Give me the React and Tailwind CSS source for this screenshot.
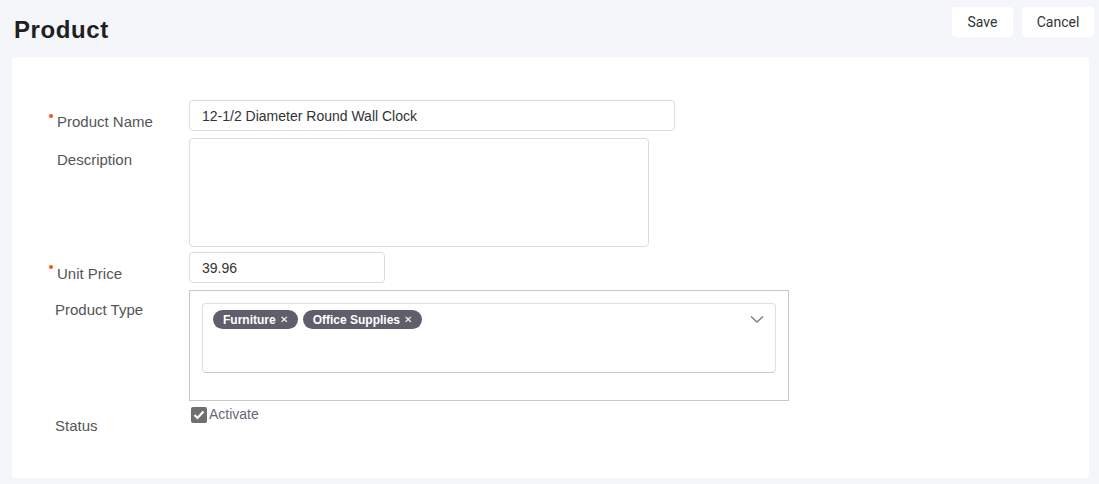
export default function App() {
    const font = { fontFamily: '"Liberation Sans", Arial, sans-serif' };

    return (
        <div className="min-h-[484px] bg-[#f5f6fa] pl-3 pr-[10px] pt-[7px] pb-[6px]" style={font}>
            {/* Header */}
            <div className="flex items-start justify-between h-[50px]">
                <h1 className="ml-[2px] mt-[9px] text-[24px] leading-[28px] font-bold tracking-[0.6px] text-[#1f1f24]">Product</h1>
                <div className="flex gap-[9px] mr-[-5px]">
                    <button className="h-[30px] w-[61px] rounded bg-white text-[14px] text-[#333] font-['Roboto']">Save</button>
                    <button className="h-[30px] w-[72px] rounded bg-white text-[14px] text-[#333] font-['Roboto']">Cancel</button>
                </div>
            </div>

            {/* Form card */}
            <div className="h-[421px] rounded bg-white pl-[45px] pt-[43px]">
                <div className="flex">
                    <label className="relative h-[31px] w-[132px] pt-[12px] text-[15px] leading-5 text-[#555]">
                        <span className="absolute left-[-8px] top-[14px] h-[4px] w-[4px] rounded-full bg-[#f0541e]" />
                        Product Name
                    </label>
                    <input readOnly value="12-1/2 Diameter Round Wall Clock" className="h-[31px] w-[486px] rounded border border-[#dcdcdc] px-[12px] text-[14px] text-[#333] outline-none" />
                </div>

                <div className="flex mt-[7px]">
                    <label className="h-[31px] w-[132px] pt-[12px] text-[15px] leading-5 text-[#555]">Description</label>
                    <textarea readOnly className="h-[109px] w-[460px] resize-none rounded border border-[#dcdcdc] outline-none" />
                </div>

                <div className="flex mt-[5px]">
                    <label className="relative h-[31px] w-[132px] pt-[12px] text-[15px] leading-5 text-[#555]">
                        <span className="absolute left-[-8px] top-[13px] h-[4px] w-[4px] rounded-full bg-[#f0541e]" />
                        Unit Price
                    </label>
                    <input readOnly value="39.96" className="h-[31px] w-[196px] rounded border border-[#dcdcdc] px-[12px] text-[14px] text-[#333] outline-none" />
                </div>

                <div className="flex mt-[7px]">
                    <label className="h-[31px] w-[132px] -ml-[2px] mr-[2px] pt-[10px] text-[15px] leading-5 text-[#555]">Product Type</label>
                    <div className="h-[111px] w-[600px] border border-[#c8c8c8] p-[12px] pb-0">
                        <div className="relative h-[70px] w-[574px] rounded border border-[#e0e0e0] border-b-[#c8c8c8] pl-[10px] pt-[6px]">
                            <div className="flex gap-[5px]">
                                <span className="flex h-[19px] items-center gap-[4px] rounded-full bg-[#5f5e6a] px-[10px] text-[12px] font-bold text-white">
                                    Furniture <span className="text-[10px] font-normal">✕</span>
                                </span>
                                <span className="flex h-[19px] items-center gap-[4px] rounded-full bg-[#5f5e6a] px-[10px] text-[12px] font-bold text-white">
                                    Office Supplies <span className="text-[10px] font-normal">✕</span>
                                </span>
                            </div>
                            <svg className="absolute right-[11px] top-[11px]" width="14" height="9" viewBox="0 0 14 9" fill="none">
                                <path d="M1 1.5 L7 7 L13 1.5" stroke="#7a7f90" strokeWidth="1.5" />
                            </svg>
                        </div>
                    </div>
                </div>

                <div className="flex mt-[5px]">
                    <label className="w-[132px] -ml-[2px] mr-[2px] pt-[10px] text-[15px] leading-5 text-[#555]">Status</label>
                    <div className="flex items-start pl-[2px] pt-[1px]">
                        <span className="flex h-[16px] w-[16px] items-center justify-center rounded-[2px] bg-[#6f6f6f]">
                            <svg width="12" height="10" viewBox="0 0 12 10" fill="none">
                                <path d="M1.5 5 L4.5 8 L10.5 1.5" stroke="white" strokeWidth="2.2" />
                            </svg>
                        </span>
                        <span className="ml-[2px] -mt-[3px] text-[14px] leading-5 text-[#6a6878]">Activate</span>
                    </div>
                </div>
            </div>
        </div>
    );
}
